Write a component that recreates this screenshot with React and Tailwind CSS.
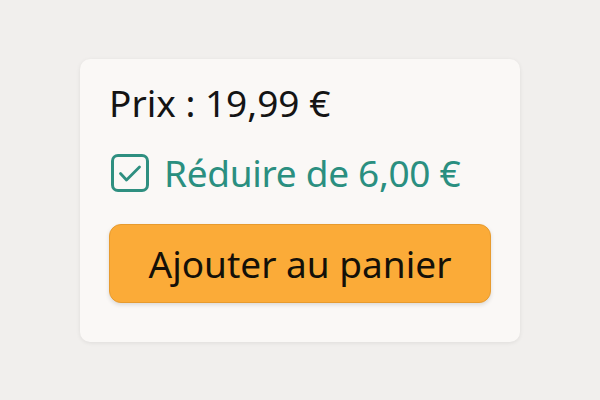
export default function App() {
  return (
    <div className="w-[600px] h-[400px] bg-[#f1efed] flex items-start justify-center pt-[59px]" style={{ fontFamily: '"Noto Sans", "Open Sans", sans-serif' }}>
      <div className="w-[440px] h-[283px] bg-[#faf8f6] rounded-[10px] shadow-[0_1px_4px_rgba(0,0,0,0.08)] pl-[29px] pr-[29px] pt-[19px]">
        <div className="text-[37px] leading-[50px] text-[#141414]">Prix&nbsp;: 19,99 €</div>
        <div className="flex items-center gap-[15px] mt-[20px] h-[50px]">
          <div className="w-[38px] h-[38px] ml-[2px] rounded-[7px] border-[3px] border-[#2e8f80] shrink-0">
            <svg width="32" height="32" viewBox="0 0 32 32" fill="none" stroke="#2e8f80" strokeWidth="2.8" strokeLinecap="round" strokeLinejoin="round">
              <path d="M6.5 16.5l6 6.5L25.5 10" />
            </svg>
          </div>
          <span className="text-[37px] leading-[50px] text-[#2a8f80] tracking-[-0.3px]">Réduire de 6,00 €</span>
        </div>
        <button className="mt-[26px] w-[382px] h-[79px] rounded-[12px] bg-[#fbab38] border border-[#e79b2e] shadow-[0_2px_4px_rgba(0,0,0,0.12)] text-[37px] leading-[50px] text-[#141008] flex items-center justify-center">
          Ajouter au panier
        </button>
      </div>
    </div>
  );
}
